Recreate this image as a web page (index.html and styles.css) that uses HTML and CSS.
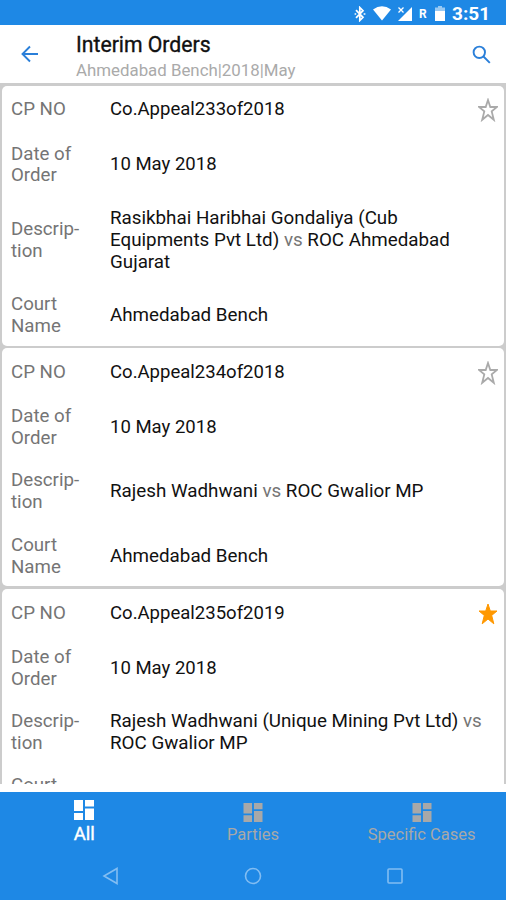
FILE: index.html
```html
<!DOCTYPE html>
<html lang="en">
<head>
<meta charset="utf-8">
<title>Interim Orders</title>
<link rel="stylesheet" href="styles.css">
</head>
<body>
<svg width="0" height="0" class="defs">
  <symbol id="star" viewBox="0 0 20 24"><path d="M10 2 12.300 9H19L13.700 13.400 15.800 21.800 10 17 4.200 21.800 6.300 13.400 1 9H7.700Z"/></symbol>
  <symbol id="dash" viewBox="0 0 20 20"><path d="M0 0h9v11H0zM11 0h9v6.500h-9zM0 13h9v7H0zM11 8.500h9V20h-9z"/></symbol>
</svg>
<div class="status">
  <svg class="bt" viewBox="0 0 12 16"><path d="M2 4.200 9 11.300 5.800 14.500V1.500L9 4.700 2 11.800M.6 8h1.600M9.600 8h1.800"/></svg>
  <svg class="wifi" viewBox="0 0 18 15"><path d="M0 3.600Q9-3 18 3.600L9 14.500Z"/></svg>
  <svg class="signal" viewBox="0 0 16 16"><path d="M15 1V15H1Z"/><path class="x" d="M1.500 1.500l5 5M6.500 1.500l-5 5"/></svg>
  <span class="roam">R</span>
  <svg class="battery" viewBox="0 0 10 15"><path class="dim" d="M0 1.500H3V0H7V1.500H10V5H0Z"/><path d="M0 5H10V15H0Z"/></svg>
  <span class="clock">3:51</span>
</div>
<header class="bar">
  <svg class="back" viewBox="0 0 18 18"><path d="M17 9H2M9 1.500 1.500 9 9 16.500"/></svg>
  <div class="titles"><h1>Interim Orders</h1><p>Ahmedabad Bench|2018|May</p></div>
  <svg class="search" viewBox="0 0 19 19"><circle cx="7.300" cy="7.300" r="5.700"/><path d="M11.500 11.500 17.800 17.800"/></svg>
</header>
<main class="list">
  <section class="card">
    <div class="row first"><span class="label">CP NO</span><span class="value num">Co.Appeal233of2018</span><svg class="star"><use href="#star"/></svg></div>
    <div class="row"><span class="label">Date of<br>Order</span><span class="value num">10 May 2018</span></div>
    <div class="row"><span class="label">Descrip-<br>tion</span><span class="value">Rasikbhai Haribhai Gondaliya (Cub<br>Equipments Pvt Ltd) <i>vs</i> ROC Ahmedabad<br>Gujarat</span></div>
    <div class="row"><span class="label">Court<br>Name</span><span class="value">Ahmedabad Bench</span></div>
  </section>
  <section class="card">
    <div class="row first"><span class="label">CP NO</span><span class="value num">Co.Appeal234of2018</span><svg class="star"><use href="#star"/></svg></div>
    <div class="row"><span class="label">Date of<br>Order</span><span class="value num">10 May 2018</span></div>
    <div class="row"><span class="label">Descrip-<br>tion</span><span class="value">Rajesh Wadhwani <i>vs</i> ROC Gwalior MP</span></div>
    <div class="row"><span class="label">Court<br>Name</span><span class="value">Ahmedabad Bench</span></div>
  </section>
  <section class="card">
    <div class="row first"><span class="label">CP NO</span><span class="value num">Co.Appeal235of2019</span><svg class="star on"><use href="#star"/></svg></div>
    <div class="row"><span class="label">Date of<br>Order</span><span class="value num">10 May 2018</span></div>
    <div class="row"><span class="label">Descrip-<br>tion</span><span class="value">Rajesh Wadhwani (Unique Mining Pvt Ltd) <i>vs</i><br>ROC Gwalior MP</span></div>
    <div class="row"><span class="label">Court</span></div>
  </section>
</main>
<nav class="tabs">
  <div class="tab active"><svg><use href="#dash"/></svg><span>All</span></div>
  <div class="tab"><svg><use href="#dash"/></svg><span>Parties</span></div>
  <div class="tab"><svg><use href="#dash"/></svg><span>Specific Cases</span></div>
</nav>
<div class="system">
  <svg viewBox="0 0 18 18"><path d="M15 1.500V16.500L2 9Z"/></svg>
  <svg viewBox="0 0 18 18"><circle cx="9" cy="9" r="7.500"/></svg>
  <svg viewBox="0 0 18 18"><rect x="2" y="2" width="14" height="14" rx="1"/></svg>
</div>
</body>
</html>
```

FILE: styles.css
```css
* { box-sizing: border-box; }
body { margin: 0; width: 506px; height: 900px; overflow: hidden; display: flex; flex-direction: column; background: #fff; font-family: Roboto, "Liberation Sans", sans-serif; }
svg { display: block; flex: none; }
.defs { position: absolute; }

.status { height: 25px; flex: none; display: flex; align-items: center; background: #1e88e5; color: #fff; padding: 2px 0 0 354px; fill: #fff; }
.bt { width: 12px; height: 16px; fill: none; stroke: #fff; stroke-width: 1.7; }
.wifi { width: 18px; height: 15px; margin-left: 7px; }
.signal { width: 16px; height: 16px; margin-left: 6px; }
.x { stroke: #fff; stroke-width: 1.3; }
.roam { width: 8px; margin-left: 6px; font-size: 12px; font-weight: 700; line-height: 16px; }
.battery { width: 10px; height: 15px; margin-left: 8px; }
.dim { opacity: .55; }
.clock { margin-left: 7px; padding-top: 1px; font-size: 19px; font-weight: 700; line-height: 24px; white-space: nowrap; }

.bar { height: 58px; flex: none; display: flex; align-items: center; padding: 0 15px 0 21px; }
.back, .search { fill: none; stroke: #2a7fd9; stroke-width: 1.9; }
.back { width: 18px; height: 18px; }
.search { width: 19px; height: 19px; margin-left: auto; }
.titles { margin-left: 37px; padding-top: 6px; }
h1 { margin: 0; font-size: 21.200px; line-height: 26px; font-weight: 400; color: #111; -webkit-text-stroke: .35px #111; }
p { margin: 0; font-size: 16.850px; line-height: 25px; color: #aaa; }

.list { height: 701px; flex: none; overflow: hidden; background: #ccc; padding: 2.500px 2px 0 2px; display: flex; flex-direction: column; gap: 2.500px; }
.card { flex: none; background: #fff; border-radius: 5px; padding: 2px 6px 0 9px; }
.row { display: flex; align-items: center; padding: 10.250px 0; font-size: 18.700px; line-height: 21.900px; }
.row:last-child { padding-bottom: 7.750px; }
.first { height: 45.750px; }
.label { width: 99px; flex: none; color: #757575; }
.value { flex: 1; color: #111; white-space: nowrap; font-size: 18.800px; }
.num { font-size: 18.550px; }
i { font-style: normal; color: #757575; }
.star { width: 20px; height: 24px; fill: none; stroke: #aaa; stroke-width: 1.8; }
.star.on { fill: #ff9800; stroke: #ff9800; stroke-width: 1; }

.tabs { height: 60px; flex: none; margin-top: 8px; display: grid; grid-template-columns: repeat(3, 1fr); background: #1e88e5; color: #a8a8a8; fill: #a8a8a8; font-size: 16.500px; }
.tab { display: flex; flex-direction: column; align-items: center; padding-top: 11px; }
.tab svg { width: 20px; height: 19px; }
.tab span { line-height: 22px; margin-top: 2px; }
.active { padding-top: 8px; color: #fff; fill: #fff; font-size: 18.500px; }
.active svg { height: 20px; }
.active span { margin-top: 3px; -webkit-text-stroke: .4px #fff; }

.system { flex: 1; display: flex; justify-content: space-between; padding: 15px 102px 0; background: #1e88e5; fill: none; stroke: #82bdf2; stroke-width: 1.6; }
.system svg { width: 18px; height: 18px; }
```
